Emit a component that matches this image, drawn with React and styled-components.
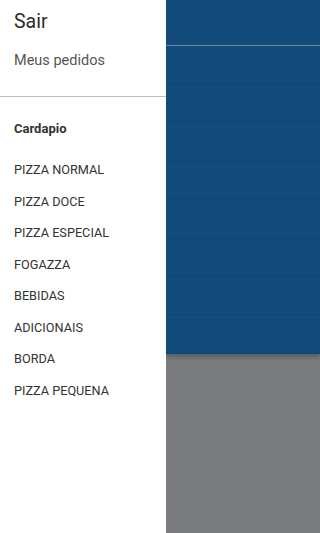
import React from "react";
import styled, { createGlobalStyle } from "styled-components";

const GlobalStyle = createGlobalStyle`
  html, body {
    margin: 0;
    padding: 0;
    background: #797b7e;
    font-family: Roboto, "Liberation Sans", Arial, sans-serif;
  }
`;

const Screen = styled.div`
  display: flex;
  width: 100vw;
  height: 100vh;
  overflow: hidden;
`;

const Drawer = styled.nav`
  width: 166px;
  flex-shrink: 0;
  background: #fff;
  display: flex;
  flex-direction: column;
  z-index: 2;
`;

const TopLinks = styled.div`
  display: flex;
  flex-direction: column;
  padding: 10px 0 0;
  border-bottom: 1px solid #bdbdbd;
  height: 86px;
`;

const TopLink = styled.a`
  padding: 0 14px;
  color: ${(p) => (p.$big ? "#2b2b2b" : "#555")};
  font-size: ${(p) => (p.$big ? "19.5px" : "14.5px")};
  line-height: ${(p) => (p.$big ? "24px" : "20px")};
  margin-bottom: ${(p) => (p.$big ? "17px" : "0")};
  text-decoration: none;
`;

const Section = styled.div`
  display: flex;
  flex-direction: column;
  padding-top: 23px;
`;

const SectionTitle = styled.h3`
  margin: 0 0 23px;
  padding: 0 14px;
  font-size: 13px;
  font-weight: 700;
  color: #333;
  line-height: 18px;
`;

const MenuItem = styled.a`
  padding: 0 14px;
  height: 31.5px;
  font-size: 12.7px;
  line-height: 18px;
  color: #333;
  text-transform: uppercase;
  text-decoration: none;
`;

const Backdrop = styled.div`
  flex: 1;
  display: flex;
  flex-direction: column;
  background: #797b7e;
`;

const PageTop = styled.div`
  background: #134b7a;
  box-shadow: 0 3px 4px rgba(0, 0, 0, 0.25);
`;

const HeaderBar = styled.div`
  height: 45px;
  border-bottom: 1px solid #6a86a0;
`;

const Row = styled.div`
  height: 38.5px;
  box-sizing: border-box;
  border-bottom: 1px solid #124876;
  box-shadow: inset 0 -2px 2px -1px rgba(0, 0, 0, 0.04);
`;

const categories = [
  "Pizza Normal",
  "Pizza Doce",
  "Pizza Especial",
  "Fogazza",
  "Bebidas",
  "Adicionais",
  "Borda",
  "Pizza Pequena",
];

export default function App() {
  return (
    <>
      <GlobalStyle />
      <Screen>
        <Drawer>
          <TopLinks>
            <TopLink $big href="#">
              Sair
            </TopLink>
            <TopLink href="#">Meus pedidos</TopLink>
          </TopLinks>
          <Section>
            <SectionTitle>Cardapio</SectionTitle>
            {categories.map((c) => (
              <MenuItem key={c} href="#">
                {c}
              </MenuItem>
            ))}
          </Section>
        </Drawer>
        <Backdrop>
          <PageTop>
            <HeaderBar />
            {categories.map((c) => (
              <Row key={c} />
            ))}
          </PageTop>
        </Backdrop>
      </Screen>
    </>
  );
}
